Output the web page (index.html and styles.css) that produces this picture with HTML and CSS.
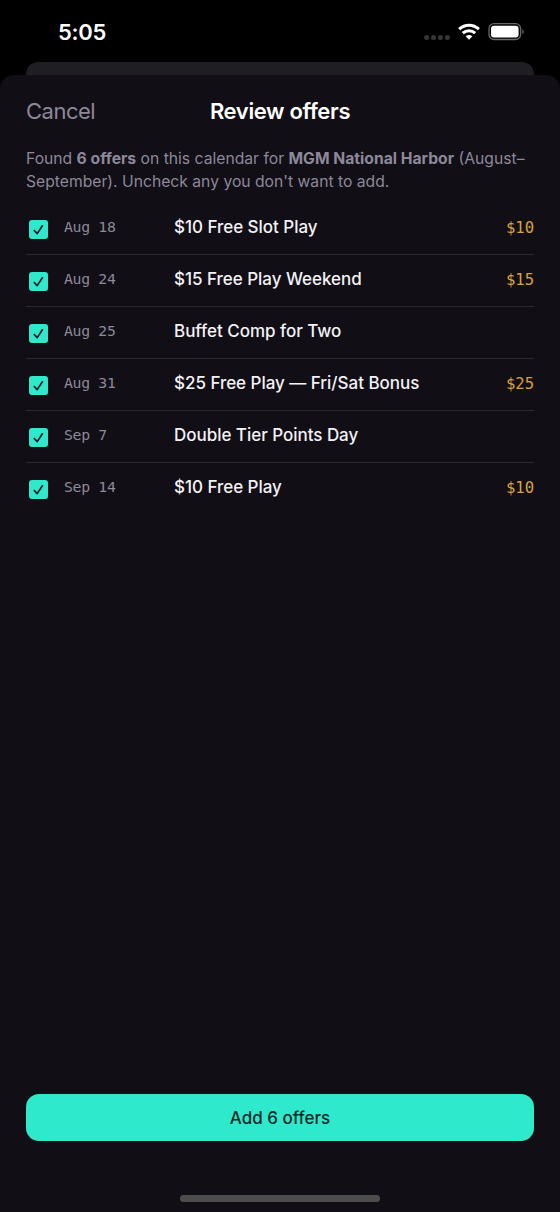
FILE: index.html
```html
<!DOCTYPE html>
<html lang="en">
<head>
<meta charset="utf-8">
<title>Review offers</title>
<link rel="stylesheet" href="styles.css">
</head>
<body>
<svg class="defs" width="0" height="0"><symbol id="check" viewBox="0 0 19 19"><path d="M5.300 10.500 8.200 13.600 13.400 5.800" fill="none" stroke="#101c20" stroke-width="1.700" stroke-linecap="round" stroke-linejoin="round"/></symbol></svg>
<div class="screen">
  <div class="status">
    <span class="time">5:05</span>
    <div class="indicators">
      <svg class="signal" width="26" height="6" viewBox="0 0 26 6" fill="#363636"><circle cx="2.600" cy="2.600" r="2.500"/><circle cx="9.500" cy="2.600" r="2.500"/><circle cx="16.400" cy="2.600" r="2.500"/><circle cx="23.300" cy="2.600" r="2.500"/></svg>
      <svg class="wifi" width="22" height="17" viewBox="0 0 22 17"><g fill="none" stroke="#fff" stroke-width="3.100"><path d="M1.100 6.200Q5.500 2.200 11 2.200t9.900 4"/><path d="M4.800 10.200Q7.500 7.700 11 7.700t6.200 2.500"/></g><path d="M7.600 13.200Q11 10.600 14.400 13.200L11 16.700Z" fill="#fff"/></svg>
      <svg class="battery" width="36" height="18" viewBox="0 0 36 18"><rect x="1" y=".7" width="31.600" height="15.800" rx="5" fill="none" stroke="#686868" stroke-width="1.300"/><rect x="3" y="2.700" width="27.600" height="11.800" rx="3" fill="#fff"/><path d="M34.300 6.300c1.900.700 1.900 4.100 0 4.800Z" fill="#686868"/></svg>
    </div>
  </div>
  <div class="backdrop"></div>
  <main class="sheet">
    <header class="header"><span class="cancel">Cancel</span><h1 class="title">Review offers</h1></header>
    <p class="summary">Found <b>6 offers</b> on this calendar for <b>MGM National Harbor</b> (August–<br>September). Uncheck any you don't want to add.</p>
    <ul class="offers">
      <li class="offer"><svg class="box"><use href="#check"/></svg><span class="date">Aug 18</span><span class="name">$10 Free Slot Play</span><span class="amount">$10</span></li>
      <li class="offer"><svg class="box"><use href="#check"/></svg><span class="date">Aug 24</span><span class="name">$15 Free Play Weekend</span><span class="amount">$15</span></li>
      <li class="offer"><svg class="box"><use href="#check"/></svg><span class="date">Aug 25</span><span class="name">Buffet Comp for Two</span></li>
      <li class="offer"><svg class="box"><use href="#check"/></svg><span class="date">Aug 31</span><span class="name">$25 Free Play — Fri/Sat Bonus</span><span class="amount">$25</span></li>
      <li class="offer"><svg class="box"><use href="#check"/></svg><span class="date">Sep 7</span><span class="name">Double Tier Points Day</span></li>
      <li class="offer"><svg class="box"><use href="#check"/></svg><span class="date">Sep 14</span><span class="name">$10 Free Play</span><span class="amount">$10</span></li>
    </ul>
    <button class="add">Add 6 offers</button>
    <div class="home"></div>
  </main>
</div>
</body>
</html>
```
FILE: styles.css
```css
* { box-sizing: border-box; }
body { margin: 0; background: #000; font-family: Inter, sans-serif; }
.defs { display: block; }
.screen { height: 1212px; display: flex; flex-direction: column; overflow: hidden; }
.status { height: 62px; flex: none; display: flex; justify-content: space-between; padding: 18px 36px 0 58px; }
.time { color: #fff; font-size: 22px; font-weight: 600; line-height: 28px; letter-spacing: -.25px; }
.indicators { display: flex; align-items: flex-start; }
.signal { margin: 17px 8px 0 0; }
.wifi { margin: 5px 8px 0 0; }
.battery { margin: 5px 0 0; }
.backdrop { height: 27px; margin: 0 26px -14px; flex: none; border-radius: 12px 12px 0 0; background: #1f1e23; }
.sheet { flex: 1; display: flex; flex-direction: column; padding: 20px 26px 10px; border-radius: 14px 14px 0 0; background: #110e15; }
.header { height: 32px; display: grid; grid-template-columns: 1fr auto 1fr; align-items: center; }
.cancel { color: #8d889a; font-size: 22px; letter-spacing: -.5px; }
.title { margin: 0; color: #fff; font-size: 22px; font-weight: 600; letter-spacing: -.36px; }
.summary { margin: 20px 0 0; color: #8d889a; font-size: 15.700px; line-height: 23px; white-space: nowrap; }
.offers { list-style: none; margin: 10px 0 0; padding: 0; }
.offer { height: 52px; display: grid; grid-template-columns: 38px 110px 1fr auto; align-items: start; padding-top: 12px; border-bottom: 1px solid #2b2832; }
.offer:last-child { border: 0; }
.box { width: 19px; height: 19px; margin: 5px 0 0 2.700px; border-radius: 3px; background: #2ee9cb; }
.date { color: #8d889a; font: 14.800px/24px "DejaVu Sans Mono", monospace; letter-spacing: -.32px; }
.name { color: #f4f2f6; font-size: 17px; font-weight: 500; line-height: 24px; letter-spacing: -.03px; }
.amount { color: #d6a23e; font: 15.600px/26px "DejaVu Sans Mono", monospace; letter-spacing: -.05px; }
.add { height: 47px; flex: none; margin: auto 0 54px; padding: 0; border: 0; border-radius: 13px; background: #2ee9cb; color: #10282a; font: 500 17px Inter, sans-serif; }
.home { width: 200px; height: 7px; flex: none; align-self: center; border-radius: 4px; background: #4e4d4e; }
```
